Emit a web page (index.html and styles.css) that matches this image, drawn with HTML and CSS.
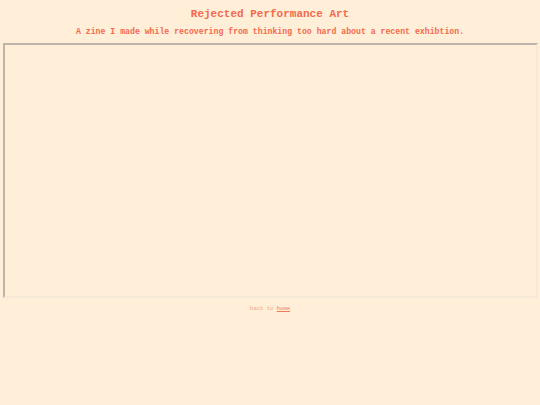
FILE: index.html
```html
<!DOCTYPE html>
<html lang="en">
<head>
<meta charset="utf-8">
<title>Rejected Performance Art</title>
<link rel="stylesheet" href="styles.css">
</head>
<body>
<header class="header">
  <h1 class="title">Rejected Performance Art</h1>
  <p class="subtitle">A zine I made while recovering from thinking too hard about a recent exhibtion.</p>
</header>
<main class="viewer">
  <div class="frame"></div>
</main>
<footer class="footer">back to <a class="footer-link" href="#">home</a></footer>
</body>
</html>
```
FILE: styles.css
```css
html, body {
  margin: 0;
  padding: 0;
  background: #ffeed8;
}
body {
  font-family: "Liberation Mono", "Courier New", monospace;
  color: #f26a4f;
  display: flex;
  flex-direction: column;
  align-items: center;
}
.header {
  padding-top: 8px;
  text-align: center;
}
.title {
  margin: 0;
  font-size: 11px;
  line-height: 13px;
  font-weight: bold;
}
.subtitle {
  margin: 6px 0 0;
  font-size: 8.2px;
  line-height: 10px;
  font-weight: bold;
}
.viewer {
  margin-top: 6px;
  width: 535px;
}
.frame {
  box-sizing: border-box;
  height: 255px;
  border-style: solid;
  border-width: 2px;
  border-color: #bdb5aa #f6e9d8 #f6e9d8 #bdb5aa;
}
.footer {
  margin-top: 7px;
  font-size: 5.6px;
  line-height: 8px;
  color: #f4a98f;
}
.footer-link {
  color: #ee7a5c;
}
```
